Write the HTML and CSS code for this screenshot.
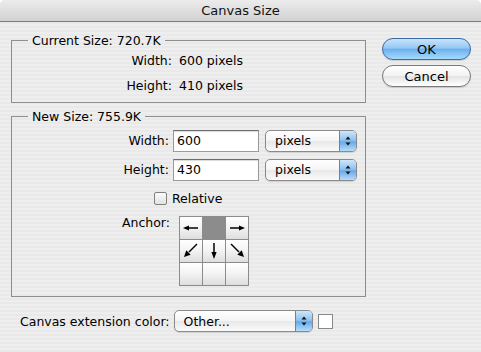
FILE: index.html
```html
<!DOCTYPE html>
<html lang="en">
<head>
    <meta charset="UTF-8">
    <title>Canvas Size</title>
    <link rel="stylesheet" href="styles.css">
</head>
<body>
    <div class="window">
        <div class="titlebar">Canvas Size</div>

        <div class="content">
            <div class="main">
                <fieldset class="group current">
                    <legend>Current Size: 720.7K</legend>
                    <div class="info-row">
                        <span class="label">Width:</span>
                        <span class="value">600 pixels</span>
                    </div>
                    <div class="info-row">
                        <span class="label">Height:</span>
                        <span class="value">410 pixels</span>
                    </div>
                </fieldset>

                <fieldset class="group new">
                    <legend>New Size: 755.9K</legend>
                    <div class="field-row">
                        <span class="label">Width:</span>
                        <div class="text-field">600</div>
                        <div class="popup unit">
                            <span>pixels</span>
                            <span class="popup-arrows">
                                <svg viewBox="0 0 8 12"><polygon points="4,1.5 6.5,4.5 1.5,4.5"/><polygon points="4,10.5 6.5,7.5 1.5,7.5"/></svg>
                            </span>
                        </div>
                    </div>
                    <div class="field-row">
                        <span class="label">Height:</span>
                        <div class="text-field">430</div>
                        <div class="popup unit">
                            <span>pixels</span>
                            <span class="popup-arrows">
                                <svg viewBox="0 0 8 12"><polygon points="4,1.5 6.5,4.5 1.5,4.5"/><polygon points="4,10.5 6.5,7.5 1.5,7.5"/></svg>
                            </span>
                        </div>
                    </div>
                    <div class="check-row">
                        <span class="checkbox"></span>
                        <span>Relative</span>
                    </div>
                    <div class="anchor-row">
                        <span class="label">Anchor:</span>
                        <div class="anchor-grid">
                            <div class="cell">
                                <svg viewBox="0 0 22 22"><line x1="8" y1="11" x2="18" y2="11"/><polygon points="3,11 9,8.4 9,13.6"/></svg>
                            </div>
                            <div class="cell selected"></div>
                            <div class="cell">
                                <svg viewBox="0 0 22 22"><line x1="4" y1="11" x2="14" y2="11"/><polygon points="19,11 13,8.4 13,13.6"/></svg>
                            </div>
                            <div class="cell">
                                <svg viewBox="0 0 22 22"><line x1="17" y1="4" x2="9" y2="12"/><polygon points="4,17 6.3,10.3 10.7,14.7"/></svg>
                            </div>
                            <div class="cell">
                                <svg viewBox="0 0 22 22"><line x1="11" y1="3" x2="11" y2="13"/><polygon points="11,19 8.4,12 13.6,12"/></svg>
                            </div>
                            <div class="cell">
                                <svg viewBox="0 0 22 22"><line x1="5" y1="4" x2="13" y2="12"/><polygon points="18,17 11.3,14.7 15.7,10.3"/></svg>
                            </div>
                            <div class="cell"></div>
                            <div class="cell"></div>
                            <div class="cell"></div>
                        </div>
                    </div>
                </fieldset>

                <div class="extension-row">
                    <span class="ext-label">Canvas extension color:</span>
                    <div class="popup ext">
                        <span>Other...</span>
                        <span class="popup-arrows">
                            <svg viewBox="0 0 8 12"><polygon points="4,1.5 6.5,4.5 1.5,4.5"/><polygon points="4,10.5 6.5,7.5 1.5,7.5"/></svg>
                        </span>
                    </div>
                    <span class="swatch"></span>
                </div>
            </div>

            <div class="buttons">
                <button class="aqua-button default">OK</button>
                <button class="aqua-button">Cancel</button>
            </div>
        </div>
    </div>
</body>
</html>
```

FILE: styles.css
```css
* {
    margin: 0;
    padding: 0;
    box-sizing: border-box;
}

body {
    font-family: "DejaVu Sans", Verdana, sans-serif;
    font-size: 12.5px;
    color: #000;
    background: #fff;
}

.window {
    width: 481px;
    height: 352px;
    border-radius: 5px 5px 0 0;
    overflow: hidden;
    background: repeating-linear-gradient(to bottom, #eeeeee 0, #eeeeee 2px, #e9e9e9 2px, #e9e9e9 4px);
}

.titlebar {
    height: 22px;
    line-height: 21px;
    text-align: center;
    font-size: 13px;
    color: #111;
    background: linear-gradient(to bottom, #ececec, #d2d2d2);
    border-bottom: 1px solid #7d7d7d;
}

.content {
    display: grid;
    grid-template-columns: 355px 89px;
    column-gap: 16px;
    padding: 11px 10px 0 11px;
}

/* group boxes */
.group {
    border: 1px solid #8e8e8e;
    padding: 0 7px 0 0;
}

.group legend {
    margin-left: 16px;
    padding: 0 4px;
    line-height: 15px;
}

.current {
    height: 70px;
}

.info-row {
    display: grid;
    grid-template-columns: 160px auto;
    column-gap: 7px;
    height: 25px;
    align-items: center;
}

.label {
    text-align: right;
}

.new {
    margin-top: 6px;
    height: 188px;
}

.field-row {
    display: grid;
    grid-template-columns: 157px 86px 94px;
    column-gap: 4px;
    align-items: center;
    margin-top: 5px;
    height: 23px;
}

.field-row + .field-row {
    margin-top: 6px;
}

.text-field {
    height: 22px;
    line-height: 20px;
    padding-left: 3px;
    background: #fff;
    border: 1px solid #9a9a9a;
    border-top-color: #6e6e6e;
    box-shadow: inset 0 1px 1px rgba(0, 0, 0, 0.15);
}

.field-row .popup {
    margin-left: 2px;
}

/* popup menus */
.popup {
    display: flex;
    align-items: center;
    justify-content: space-between;
    height: 22px;
    padding-left: 9px;
    border: 1px solid #8a8a8a;
    border-radius: 5px;
    background: linear-gradient(to bottom, #ffffff, #f4f4f4 50%, #e8e8e8 51%, #fafafa);
    box-shadow: 0 1px 1px rgba(0, 0, 0, 0.12);
}

.popup-arrows {
    display: flex;
    align-items: center;
    justify-content: center;
    width: 17px;
    height: 20px;
    border-left: 1px solid #5b84b8;
    border-radius: 0 4px 4px 0;
    background: linear-gradient(to bottom, #cfe6fb, #8ec3f1 45%, #6aa9e8 55%, #b5ddfb);
}

.popup-arrows svg {
    width: 8px;
    height: 12px;
    fill: #111;
}

.check-row {
    display: flex;
    align-items: center;
    gap: 5px;
    margin: 9px 0 0 142px;
    height: 16px;
}

.checkbox {
    width: 13px;
    height: 13px;
    border: 1px solid #7f7f7f;
    border-radius: 2px;
    background: linear-gradient(to bottom, #fafafa, #e2e2e2);
}

.anchor-row {
    display: flex;
    align-items: flex-start;
    margin-top: 10px;
}

.anchor-row .label {
    width: 158px;
    margin-top: -1px;
}

.anchor-grid {
    display: grid;
    grid-template-columns: repeat(3, 22px);
    grid-template-rows: repeat(3, 22px);
    gap: 1px;
    padding: 1px;
    margin-left: 9px;
    background: #8c8c8c;
}

.cell {
    background: linear-gradient(to bottom, #ffffff, #f4f4f4 45%, #dedede);
}

.cell.selected {
    background: #8c8c8c;
}

.cell svg {
    display: block;
    width: 22px;
    height: 22px;
    fill: #000;
    stroke: #000;
    stroke-width: 1.5;
}

.cell svg polygon {
    stroke: none;
}

.extension-row {
    display: flex;
    align-items: center;
    margin: 13px 0 0 9px;
}

.ext-label {
    margin-right: 4px;
}

.popup.ext {
    width: 139px;
}

.swatch {
    width: 15px;
    height: 15px;
    margin-left: 5px;
    background: #fff;
    border: 1px solid #888;
}

/* push buttons */
.buttons {
    display: flex;
    flex-direction: column;
    gap: 5px;
    padding-top: 5px;
}

.aqua-button {
    height: 22px;
    border-radius: 11px;
    border: 1px solid #7a7a7a;
    font-family: inherit;
    font-size: 13px;
    color: #000;
    background: linear-gradient(to bottom, #ffffff, #f2f2f2 50%, #e3e3e3 51%, #ffffff);
    box-shadow: 0 1px 1px rgba(0, 0, 0, 0.15);
}

.aqua-button.default {
    border-color: #3b6ba5;
    background: linear-gradient(to bottom, #c9e4fb, #94c8f3 45%, #6cb1ee 52%, #a6dbfc);
}
```
